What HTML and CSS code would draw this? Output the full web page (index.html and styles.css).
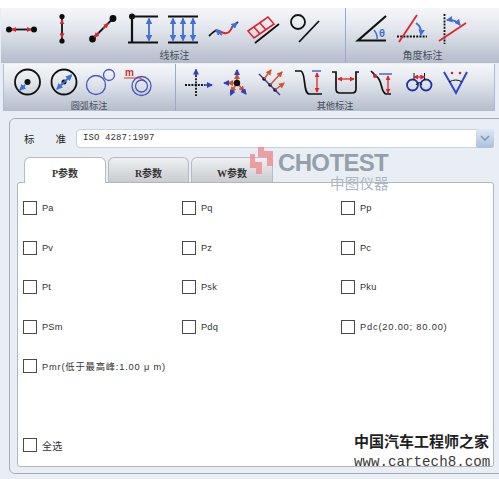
FILE: index.html
```html
<!DOCTYPE html>
<html lang="zh">
<head>
<meta charset="utf-8">
<title>P参数</title>
<link rel="stylesheet" href="styles.css">
</head>
<body>
<svg width="0" height="0" class="defs">
  <defs>
    <marker id="r" viewBox="0 0 6 6" refX="5" refY="3" markerWidth="5" markerHeight="5" markerUnits="userSpaceOnUse" orient="auto-start-reverse"><path d="M0 0L6 3L0 6z" fill="#e2232a"/></marker>
    <marker id="b" viewBox="0 0 6 6" refX="5" refY="3" markerWidth="6.500" markerHeight="6.500" markerUnits="userSpaceOnUse" orient="auto-start-reverse"><path d="M0 0L6 3L0 6z" fill="#3f6fd8"/></marker>
    <marker id="n" viewBox="0 0 6 6" refX="5" refY="3" markerWidth="6" markerHeight="6" markerUnits="userSpaceOnUse" orient="auto-start-reverse"><path d="M0 0L6 3L0 6z" fill="#2f3fc0"/></marker>
    <marker id="o" viewBox="0 0 6 6" refX="5" refY="3" markerWidth="6" markerHeight="6" markerUnits="userSpaceOnUse" orient="auto"><path d="M0 0L6 3L0 6z" fill="#d8502a"/></marker>
  </defs>
</svg>
<main class="page">
  <div class="ribbon ribbon-one">
    <section class="group group-line">
      <svg class="strip" viewBox="0 8 346 42" width="346" height="42">
        <g class="k"><path d="M9 29.5H34"/><path d="M62 16.5V41"/><path d="M92.5 39L113 18.5"/></g>
        <g class="dots"><circle cx="9" cy="29.5" r="3"/><circle cx="34" cy="29.5" r="3"/><circle cx="62" cy="16.5" r="2.6"/><circle cx="62" cy="41" r="2.6"/><circle cx="92.5" cy="39" r="3.4"/><circle cx="113" cy="18.5" r="3.4"/><circle cx="132" cy="16.5" r="3"/></g>
        <g class="ra"><path d="M16 29.5H12" /><path d="M27 29.5H31"/><path d="M62 24V20"/><path d="M62 33.5V37.5"/><path d="M103 28.5L108 23.5"/><path d="M99 32.5L94.5 37"/></g>
        <g class="k2"><path d="M130 16.5H158M128 42.5H158M132 16.5V42.5"/><path d="M168 16.5H198M168 42.5H198"/></g>
        <g class="ba"><path d="M149 29V18.5"/><path d="M149 29V40.5"/><path d="M173 29V18.5"/><path d="M173 29V40.5"/><path d="M183 29V18.5"/><path d="M183 29V40.5"/><path d="M193 29V18.5"/><path d="M193 29V40.5"/></g>
        <path class="k" d="M209 36C212 33 214 31 217 30"/><path class="red" d="M217 30C221 32 225 35 229 32C231 30 232 28 233 26"/><path class="k" d="M233 26L238 22"/>
        <path class="ba" d="M222 35L216 30"/><path class="ba" d="M231 28L237 23"/>
        <g class="ladder"><path d="M248 31L268 17L274 24L254 38Z"/><path d="M254 27L260 34M260 23L266 30"/></g>
        <path class="k" d="M255 43L279 24"/>
        <circle class="ring" cx="298" cy="22" r="7"/><path class="k" d="M299 42L319 21"/>
      </svg>
      <span class="cap cap-line">线标注</span>
    </section>
    <section class="group group-angle">
      <svg class="strip" viewBox="347 8 152 42" width="152" height="42">
        <path class="k2" d="M387 16L359 40.5H387"/>
        <path class="blue" d="M375 30Q379 35 378 40"/>
        <text class="theta" x="380" y="37">θ</text>
        <path class="dash" d="M398 36.5H428"/>
        <path class="red" d="M400 42L418 15"/>
        <path class="ba" d="M417 23Q423 27 422 35"/>
        <path class="dashv" d="M445.500 14V44"/>
        <path class="red" d="M440 41L467 23"/>
        <path class="ba ba-both" d="M448 20Q456 19 461 25"/>
      </svg>
      <span class="cap cap-angle">角度标注</span>
    </section>
  </div>
  <div class="ribbon ribbon-two">
    <section class="group group-arc">
      <svg class="strip" viewBox="3 64 173 33" width="173" height="33">
        <circle class="ring" cx="27.500" cy="82" r="12.500"/><circle cx="27.500" cy="82" r="3" />
        <path class="ba" d="M25 85L20 90"/>
        <circle class="ring" cx="64" cy="82" r="12.500"/><circle cx="64" cy="82" r="2.500"/>
        <path class="ba ba-both" d="M57 89L71.500 75"/>
        <circle class="thin" cx="96" cy="85" r="9.500"/><circle class="thin" cx="109" cy="75" r="5.500"/>
        <text class="m" x="125" y="76">m</text>
        <path class="redthin" d="M124 78H140L145 81"/>
        <circle class="thin" cx="141.500" cy="86" r="9.500"/><circle class="thin" cx="141.500" cy="86" r="6"/>
      </svg>
      <span class="cap cap-arc">圆弧标注</span>
    </section>
    <section class="group group-other">
      <svg class="strip" viewBox="177 64 317 33" width="317" height="33">
        <path class="dash" d="M186 85H206"/><path class="dashv" d="M197 75V96"/>
        <path class="ba-n" d="M197 76V69.500"/><path class="ba-n" d="M205 85H213"/>
        <g class="oa"><path d="M238 83V74"/><path d="M238 83H229"/><path d="M238 83L232 92"/><path d="M238 83L245 91"/></g>
        <circle cx="238" cy="83" r="3.200"/>
        <g class="ba-n"><path d="M238 75V70"/><path d="M230 83H225"/><path d="M234 90L231.500 95"/><path d="M243 89L247 94"/></g>
        <path class="navy" d="M260 74L281 95"/>
        <circle cx="265" cy="79" r="1.800"/><circle cx="271" cy="85" r="1.800"/><circle cx="276" cy="90" r="1.800"/>
        <g class="oa"><path d="M265 79L272 70"/><path d="M271 85L283 72"/><path d="M276 90L285 83"/></g>
        <path class="k-plain" d="M296 71H302C307 73 304 93 310 94H323"/>
        <path class="nv" d="M313 71H322"/>
        <path class="ra2" d="M318 73V92"/>
        <path class="k-plain" d="M333 72H337V89Q337 93 341 93H353Q357 93 357 89V72H360"/>
        <path class="ra2" d="M339 79H355"/>
        <path class="k-plain" d="M372 71L377 76C384 80 381 92 387 94H392"/>
        <circle class="reddot" cx="376" cy="76" r="2"/>
        <path class="nv" d="M380 74H393"/>
        <path class="ra2" d="M389 76V93"/>
        <circle class="ringn" cx="413.500" cy="85" r="5.500"/><circle class="ringn" cx="427" cy="85" r="5.500"/>
        <path class="k-thin" d="M415 73V80M425.500 73V80M417 85Q420 80 423 85"/>
        <path class="ra2" d="M415 77H425.500"/>
        <path class="vee" d="M445 72L457 93L468 72"/>
        <path class="k-thin2" d="M450 82Q457 78 463 82"/>
        <circle class="reddot" cx="453" cy="73" r="1.300"/><circle class="reddot" cx="461" cy="73" r="1.300"/>
      </svg>
      <span class="cap cap-other">其他标注</span>
    </section>
  </div>

  <div class="panel">
    <div class="std-row">
      <span class="std-label"><span>标</span><span>准</span></span>
      <div class="select">
        <span class="select-value">ISO 4287:1997</span>
        <span class="select-btn"><svg width="10" height="6" viewBox="0 0 10 6"><path class="chev" d="M1 1L5 5L9 1"/></svg></span>
      </div>
    </div>
    <div class="tabs">
      <div class="tab tab-active">P参数</div>
      <div class="tab tab-mid">R参数</div>
      <div class="tab">W参数</div>
    </div>
    <div class="tab-body">
      <div class="opts">
        <label class="opt"><i class="box"></i>Pa</label>
        <label class="opt"><i class="box"></i>Pq</label>
        <label class="opt"><i class="box"></i>Pp</label>
        <label class="opt"><i class="box"></i>Pv</label>
        <label class="opt"><i class="box"></i>Pz</label>
        <label class="opt"><i class="box"></i>Pc</label>
        <label class="opt"><i class="box"></i>Pt</label>
        <label class="opt"><i class="box"></i>Psk</label>
        <label class="opt"><i class="box"></i>Pku</label>
        <label class="opt"><i class="box"></i>PSm</label>
        <label class="opt"><i class="box"></i>Pdq</label>
        <label class="opt opt-long"><i class="box"></i>Pdc(20.00; 80.00)</label>
        <label class="opt opt-long opt-wide"><i class="box"></i>Pmr(低于最高峰:1.00 μ m)</label>
      </div>
      <label class="opt opt-all"><i class="box"></i>全选</label>
    </div>
  </div>

  <div class="mark-logo">
    <svg width="24" height="29" viewBox="0 0 24 29"><path class="logo-shape" d="M8 0H14V4H23V19H17V10H8ZM0 7H5V15H12V27H6V21H0Z"/></svg>
    <span class="mark-name">CHOTEST</span>
    <span class="mark-sub">中图仪器</span>
  </div>
  <div class="mark-site">
    <span class="site-cn">中国汽车工程师之家</span>
    <span class="site-url">www.cartech8.com</span>
  </div>
</main>
</body>
</html>
```

FILE: styles.css
```css
* { box-sizing: border-box; }
html, body { margin: 0; padding: 0; }
body { width: 499px; height: 479px; overflow: hidden; background: #fff; font-family: "Liberation Sans", "Noto Sans CJK SC", sans-serif; color: #333; }
.defs { position: absolute; }
.page { position: relative; width: 499px; height: 479px; padding-top: 8px; background: linear-gradient(#fff 0 8px, #e9eef4 8px); }

.ribbon { display: flex; background: linear-gradient(#f4f6f9 0%, #e4e8ee 35%, #b4bccb 100%); }
.ribbon-one { height: 55px; margin-left: 1px; margin-bottom: 1px; }
.ribbon-two { height: 47px; margin-left: 3px; width: 492px; border-left: 1px solid #a9bddb; border-right: 1px solid #a9bddb; }
.group { position: relative; display: block; }
.group-line { width: 346px; margin-left: -1px; border-right: 1px solid #93abd0; }
.group-angle { flex: 1; }
.group-arc { width: 173px; border-right: 1px solid #93abd0; margin-left: -1px; }
.group-other { flex: 1; }
.strip { display: block; }
.cap { display: block; text-align: center; font-size: 10px; line-height: 12px; color: #444c58; }
.cap-line { padding-left: 4px; }
.cap-arc, .cap-other { font-size: 9.200px; line-height: 12px; margin-top: 3px; }

svg circle { fill: #111; }
.k, .k2, .k-plain, .k-thin, .k-thin2 { fill: none; stroke: #111; }
.k { stroke-width: 1.800; }
.k2 { stroke-width: 2.200; }
.k-plain { stroke-width: 1.700; }
.k-thin, .k-thin2 { stroke-width: 1; }
.dash, .dashv { fill: none; stroke: #111; stroke-width: 1.800; stroke-dasharray: 2 1.200; }
.ra { fill: none; }
.ra path { stroke: #e2232a; stroke-width: 1.500; marker-end: url(#r); }
.ba, .ba path { fill: none; }
.ba path, path.ba { stroke: #3f6fd8; stroke-width: 1.800; marker-end: url(#b); }
path.ba-both { marker-start: url(#b); }
.ba-n path, path.ba-n { fill: none; stroke: #2f3fc0; stroke-width: 1.500; marker-end: url(#n); }
.oa path { fill: none; stroke: #d8502a; stroke-width: 1.500; marker-end: url(#o); }
.ra2 { fill: none; stroke: #e2232a; stroke-width: 1.300; marker-start: url(#r); marker-end: url(#r); }
.red { fill: none; stroke: #e2232a; stroke-width: 1.800; }
.redthin { fill: none; stroke: #d8392f; stroke-width: 1.200; }
.blue { fill: none; stroke: #3f6fd8; stroke-width: 1.500; }
svg .thin { fill: none; stroke: #4a55c0; stroke-width: 1.300; }
svg .ring { fill: none; stroke: #111; stroke-width: 1.800; }
svg .ringn { fill: none; stroke: #1f2fa8; stroke-width: 1.800; }
.ladder path { fill: none; stroke: #e2232a; stroke-width: 1.600; }
.dots circle { fill: #0c0c0c; }
.navy { fill: none; stroke: #2a3cb0; stroke-width: 1.500; }
.nv { fill: none; stroke: #3050c0; stroke-width: 1.300; }
.vee { fill: none; stroke: #3347c4; stroke-width: 2; }
svg .reddot { fill: #d8232a; }
.theta { font-family: "Liberation Sans", sans-serif; font-size: 11px; font-weight: bold; fill: #3f6fd8; }
.m { font-family: "Liberation Sans", sans-serif; font-size: 10px; font-weight: bold; fill: #c8352c; }

.panel { position: absolute; left: 9px; top: 118px; width: 500px; height: 356px; padding: 10px 0 0 7px; background: #e9eef4; border: 1px solid #a9aeb4; border-radius: 6px; }
.std-row { display: flex; align-items: center; height: 18px; }
.std-label { display: flex; justify-content: space-between; width: 42px; margin-left: 7px; font-size: 10.500px; color: #222; }
.select { display: flex; align-items: center; justify-content: space-between; width: 418px; height: 19px; margin-left: 10px; background: #fff; border: 1px solid #c3d2e6; border-radius: 4px; }
.select-value { padding-left: 6px; font-family: "Liberation Mono", monospace; font-size: 9px; letter-spacing: .1px; color: #333; }
.select-btn { display: flex; align-items: center; justify-content: center; width: 18px; height: 19px; margin-right: -1px; border-radius: 3px; background: linear-gradient(#dfe8f4, #a9c0de); }
.chev { fill: none; stroke: #7d8ea8; stroke-width: 1.300; }

.tabs { display: flex; gap: 2px; margin: 10px 0 0 7px; height: 25px; }
.tab { width: 82px; padding-top: 7px; text-align: center; font-family: "Liberation Serif", "Noto Sans CJK SC", serif; font-weight: bold; font-size: 10px; color: #333; border: 1px solid #b6bcc3; border-bottom: 0; border-radius: 6px 6px 0 0; background: linear-gradient(#eef0f2, #c9ccd0); }
.tab-mid { width: 81px; }
.tab-active { background: #fff; position: relative; z-index: 1; margin-bottom: -1px; height: 26px; }

.tab-body { display: flex; flex-direction: column; width: 477px; height: 285px; background: #fff; border: 1px solid #b1b6bc; border-radius: 3px; padding: 18px 0 14px 5px; }
.opts { display: grid; grid-template-columns: repeat(3, 159px); grid-auto-rows: 39.600px; }
.opt { display: flex; align-items: center; height: 14px; font-size: 9.300px; color: #333; white-space: nowrap; letter-spacing: .15px; }
.opt-long { letter-spacing: .8px; }
.opt-wide { grid-column: 1 / span 3; }
.opt-all { margin-top: auto; font-size: 10px; }
.box { flex: none; width: 14px; height: 14px; margin-right: 5px; border: 1px solid #4a4a4a; background: #fff; }

.mark-logo { position: absolute; left: 250px; top: 147px; width: 140px; height: 45px; }
.mark-logo svg { position: absolute; left: 0; top: 0; }
.logo-shape { fill: #ee8f93; opacity: .85; }
.mark-name { position: absolute; left: 28px; top: 3px; font-weight: bold; font-size: 24px; line-height: 26px; letter-spacing: -.65px; color: #8e99a5; opacity: .92; }
.mark-sub { position: absolute; left: 80px; top: 29px; font-size: 14.500px; line-height: 16px; color: #aeb6c0; letter-spacing: .2px; }

.mark-site { position: absolute; left: 354px; top: 432px; display: flex; flex-direction: column; }
.site-cn { font-family: "Noto Sans CJK SC", sans-serif; font-weight: bold; font-size: 15px; line-height: 18px; color: #1f1f1f; }
.site-url { margin-top: 4px; font-family: "Liberation Mono", monospace; font-size: 14.200px; line-height: 16px; color: #3a3a3a; }
```
